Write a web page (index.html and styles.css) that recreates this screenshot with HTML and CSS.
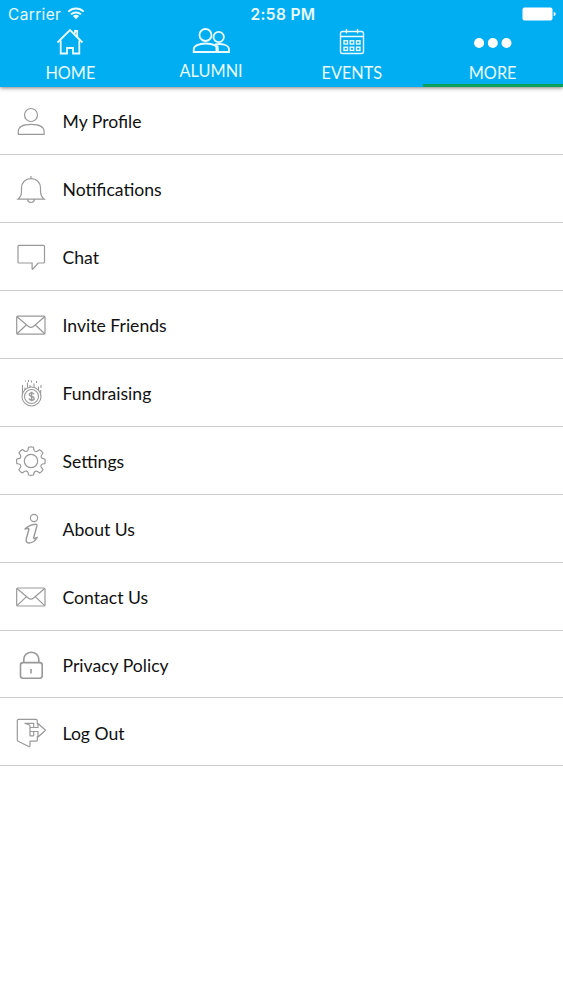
FILE: index.html
```html
<!DOCTYPE html>
<html lang="en">
<head>
<meta charset="utf-8">
<title>More</title>
<link rel="stylesheet" href="styles.css">
</head>
<body>
<header class="header">
  <div class="status">
    <div class="carrier"><span>Carrier</span>
      <svg class="wifi" width="18" height="13" viewBox="0 0 18 13"><path d="M1.3 4.600a11 11 0 0 1 15.400 0M4 7.400a7.200 7.200 0 0 1 10 0" fill="none" stroke="currentColor" stroke-width="2"/><path d="M9 12.200L5.900 9.100a4.500 4.500 0 0 1 6.200 0z" fill="currentColor"/></svg>
    </div>
    <div class="time">2:58 PM</div>
    <svg class="battery" width="34" height="14" viewBox="0 0 34 14"><rect x=".5" y=".5" width="30" height="13" rx="2" fill="currentColor"/><path d="M31.700 5a2 2 0 0 1 0 4z" fill="currentColor"/></svg>
  </div>
  <nav class="tabs">
    <a class="tab">
      <svg class="tab-icon" viewBox="0 0 40 30"><path d="M7.500 15.500L20 3l12.500 12.500M25 6.500V4h2.200v6M10.700 13.500V26.500H17v-5.500h6v5.500h6.300V13.500"/></svg>
      <span>HOME</span>
    </a>
    <a class="tab tab-raised">
      <svg class="tab-icon" viewBox="0 0 40 30"><circle cx="14.500" cy="9" r="6"/><circle cx="27.700" cy="11" r="5.200"/><path d="M2.700 26V23.500c0-3.700 5-6 12-6s12 2.300 12 6V26zM24 18.500c7-1.500 14 .5 14 5V26H27"/><path d="M26 19.500v6" stroke-width="3"/></svg>
      <span>ALUMNI</span>
    </a>
    <a class="tab">
      <svg class="tab-icon thin" viewBox="0 0 40 30"><rect x="8.500" y="4.500" width="23" height="22" rx="2"/><path d="M8.500 9.500h23M14.500 2v4.500M25.500 2v4.500"/><rect x="12" y="13.800" width="3.500" height="3.200"/><rect x="18.200" y="13.800" width="3.500" height="3.200"/><rect x="24.500" y="13.800" width="3.500" height="3.200"/><rect x="12" y="20.200" width="3.500" height="3.200"/><rect x="18.200" y="20.200" width="3.500" height="3.200"/><rect x="24.500" y="20.200" width="3.500" height="3.200"/></svg>
      <span>EVENTS</span>
    </a>
    <a class="tab active">
      <svg class="tab-icon dots" viewBox="0 0 40 30"><circle cx="6.100" cy="16" r="5"/><circle cx="19.800" cy="16" r="5"/><circle cx="33.500" cy="16" r="5"/></svg>
      <span>MORE</span>
    </a>
  </nav>
</header>
<main class="menu">
  <a class="row"><svg class="icon" viewBox="0 0 42 42"><circle cx="21" cy="15" r="6.500"/><path d="M8.300 34.300v-2.800c0-4.500 5-7.200 12.900-7.200s12.900 2.700 12.900 7.200v2.800z"/></svg><span>My Profile</span></a>
  <a class="row"><svg class="icon" viewBox="0 0 42 42"><path d="M21 8v2.500M8 31.200c2.600-2.200 3.500-4 3.500-8V20c0-5.500 4-9.300 9.500-9.300s9.500 3.800 9.500 9.300v3.200c0 4 1.100 5.800 3.800 8zM17.500 31.500c.5 4 6.500 4 7 0"/></svg><span>Notifications</span></a>
  <a class="row"><svg class="icon" viewBox="0 0 42 42"><path d="M9 9.300h24.500a1 1 0 0 1 1 1V26a1 1 0 0 1-1 1h-5.300l-5.300 6q-.8.700-.8-.5V27H9a1 1 0 0 1-1-1V10.300a1 1 0 0 1 1-1z"/></svg><span>Chat</span></a>
  <a class="row"><svg class="icon" viewBox="0 0 42 42"><rect x="6.700" y="12.200" width="28.300" height="18" rx="1"/><path d="M7 12.700l11.500 9.800q2.400 1.800 4.800 0L34.700 12.700M7 29.800l9.500-9M34.700 29.800l-9.500-9"/></svg><span>Invite Friends</span></a>
  <a class="row"><svg class="icon fine" viewBox="0 0 42 42"><circle cx="21.500" cy="24.500" r="9.500"/><circle cx="21.500" cy="24.500" r="7"/><path stroke-width="1.400" d="M24 22.300c-.6-2-4.700-1.800-4.700.3 0 2.500 4.900 1.200 4.900 3.800 0 2.300-4.400 2.500-5.200.2M21.600 19.800v9.400"/><path d="M12.500 13v9M15 15.500v2.500M17.500 10.500v5M20 13v2M21.500 8.500v2M24 11.500v3.500M26.500 9v2M28.500 14.500v3.500M31 13v3M30.700 18v3M15.500 8.500v1M18.500 8v2"/></svg><span>Fundraising</span></a>
  <a class="row"><svg class="icon" viewBox="0 0 42 42"><circle cx="21" cy="21" r="6.700"/><path d="M18.500 7.300q2.500-.8 5 0l.4 2.500q.4 1.500 1.700 1.700 1.300.2 2.400-.7l1.700-1.100q2 1.200 3.300 3.300l-1.300 2q-.9 1.200-.4 2.300.5 1.200 1.800 1.400l1.800.3q.6 2.300 0 4.600l-2.300.4q-1.300.3-1.600 1.500-.3 1.200.5 2.200l1.500 2q-1.200 2.200-3.300 3.400l-2.200-1.500q-1-.8-2.200-.2-1 .4-1.300 1.600l-.5 2q-2.500.8-5 0l-.4-2.300q-.3-1.200-1.500-1.600-1.300-.3-2.300.4l-2 1.500q-2.200-1.300-3.400-3.300l1.500-2.200q.7-1.200.2-2.300-.4-1-1.600-1.200l-2.200-.4q-.6-2.300 0-4.600l2.200-.4q1.200-.2 1.600-1.300.5-1.200-.3-2.400L9 12.900q1.200-2 3.300-3.300l2.100 1.400q1.200.8 2.300.3 1.100-.4 1.300-1.500z" stroke-linejoin="round"/></svg><span>Settings</span></a>
  <a class="row"><svg class="icon" viewBox="0 0 42 42"><circle cx="24" cy="10" r="3.600"/><path d="M15 21q4.500-4.500 10.500-4.800 1.800 0 1.400 1.800l-3.200 11.500q-.3 1.500 1 1l2.600-1.200q-2.800 5.500-8.300 5.700-3.700 0-2.700-4.200l2.500-9q.4-1.600-1.100-1.200z" stroke-width="1.400" stroke-linejoin="round"/></svg><span>About Us</span></a>
  <a class="row"><svg class="icon" viewBox="0 0 42 42"><rect x="6.700" y="12" width="28.300" height="18" rx="1"/><path d="M7 12.500l11.500 9.800q2.400 1.800 4.800 0L34.700 12.500M7 29.600l9.500-9M34.700 29.600l-9.500-9"/></svg><span>Contact Us</span></a>
  <a class="row"><svg class="icon bold" viewBox="0 0 42 42"><rect x="10.500" y="18.600" width="21.700" height="15.700" rx="2.500"/><path d="M13.800 18.500v-3.300c0-9.200 15-9.200 15 0v3.300M21 25v4.500"/></svg><span>Privacy Policy</span></a>
  <a class="row"><svg class="icon" viewBox="0 0 42 42"><path d="M27.300 12.500V8.800q0-1.500-1.500-1.500H8.700Q7.300 7.300 7.300 8.800V28q0 1 .8 1.300l10.700 5.200q1.200.5 1.200-.8v-4.500h6q1.300 0 1.300-1.300V24M14.500 11.300h9.200v4M14.500 11.300l4.500 1.500q1 .4 1 1.500v9.500h3.700V19.500M20 15.500h8v-4l7.500 6.800-7.500 6.700v-5.500h-8" stroke-linejoin="round"/></svg><span>Log Out</span></a>
</main>
</body>
</html>
```
FILE: styles.css
```css
* { box-sizing: border-box; }
body {
  margin: 0;
  background: #fff;
  color: #111;
  font-family: Lato, "Liberation Sans", sans-serif;
}
.header {
  position: relative;
  height: 87px;
  background: #02aef2;
  color: #e9fbff;
  box-shadow: 0 1px 4px rgba(0, 0, 0, .5);
}
.status {
  display: grid;
  grid-template-columns: 1fr auto 1fr;
  align-items: center;
  height: 27px;
  padding: 1px 7px 0 8px;
  font: 15.5px/26px Inter, "Liberation Sans", sans-serif;
}
.carrier {
  display: flex;
  align-items: center;
  gap: 6px;
  letter-spacing: .35px;
}
.carrier span,
.time { padding-top: 1px; }
.time {
  padding-left: 2px;
  font-weight: 600;
  letter-spacing: .35px;
}
.battery {
  justify-self: end;
  margin-bottom: 2px;
  color: #fff;
}
.wifi { margin-bottom: 2px; }
.tabs {
  display: grid;
  grid-template-columns: repeat(4, 1fr);
  height: 60px;
}
.tab {
  display: flex;
  flex-direction: column;
  align-items: center;
  font-size: 16.3px;
  line-height: 20px;
  gap: 6px;
}
.tab-raised { gap: 5px; }
.tab-raised .tab-icon { margin-top: -1px; }
.active {
  margin-left: 1px;
  padding-right: 1px;
  border-bottom: 3px solid #0d9f5c;
}
.tab-icon {
  flex: none;
  width: 40px;
  height: 30px;
  fill: none;
  stroke: currentColor;
  stroke-width: 1.8;
}
.thin { stroke-width: 1.4; }
.dots { fill: #fff; stroke: none; }
.row {
  display: flex;
  align-items: center;
  gap: 10.5px;
  height: 67.94px;
  padding: 2px 0 0 10px;
  border-bottom: 1px solid #ccc;
  font-size: 17.6px;
  line-height: 24px;
}
.row span { padding-top: 2px; }
.icon {
  width: 42px;
  height: 42px;
  fill: none;
  stroke: #999;
  stroke-width: 1.2;
}
.fine { stroke-width: 1.1; }
.bold { stroke-width: 1.6; }
```
